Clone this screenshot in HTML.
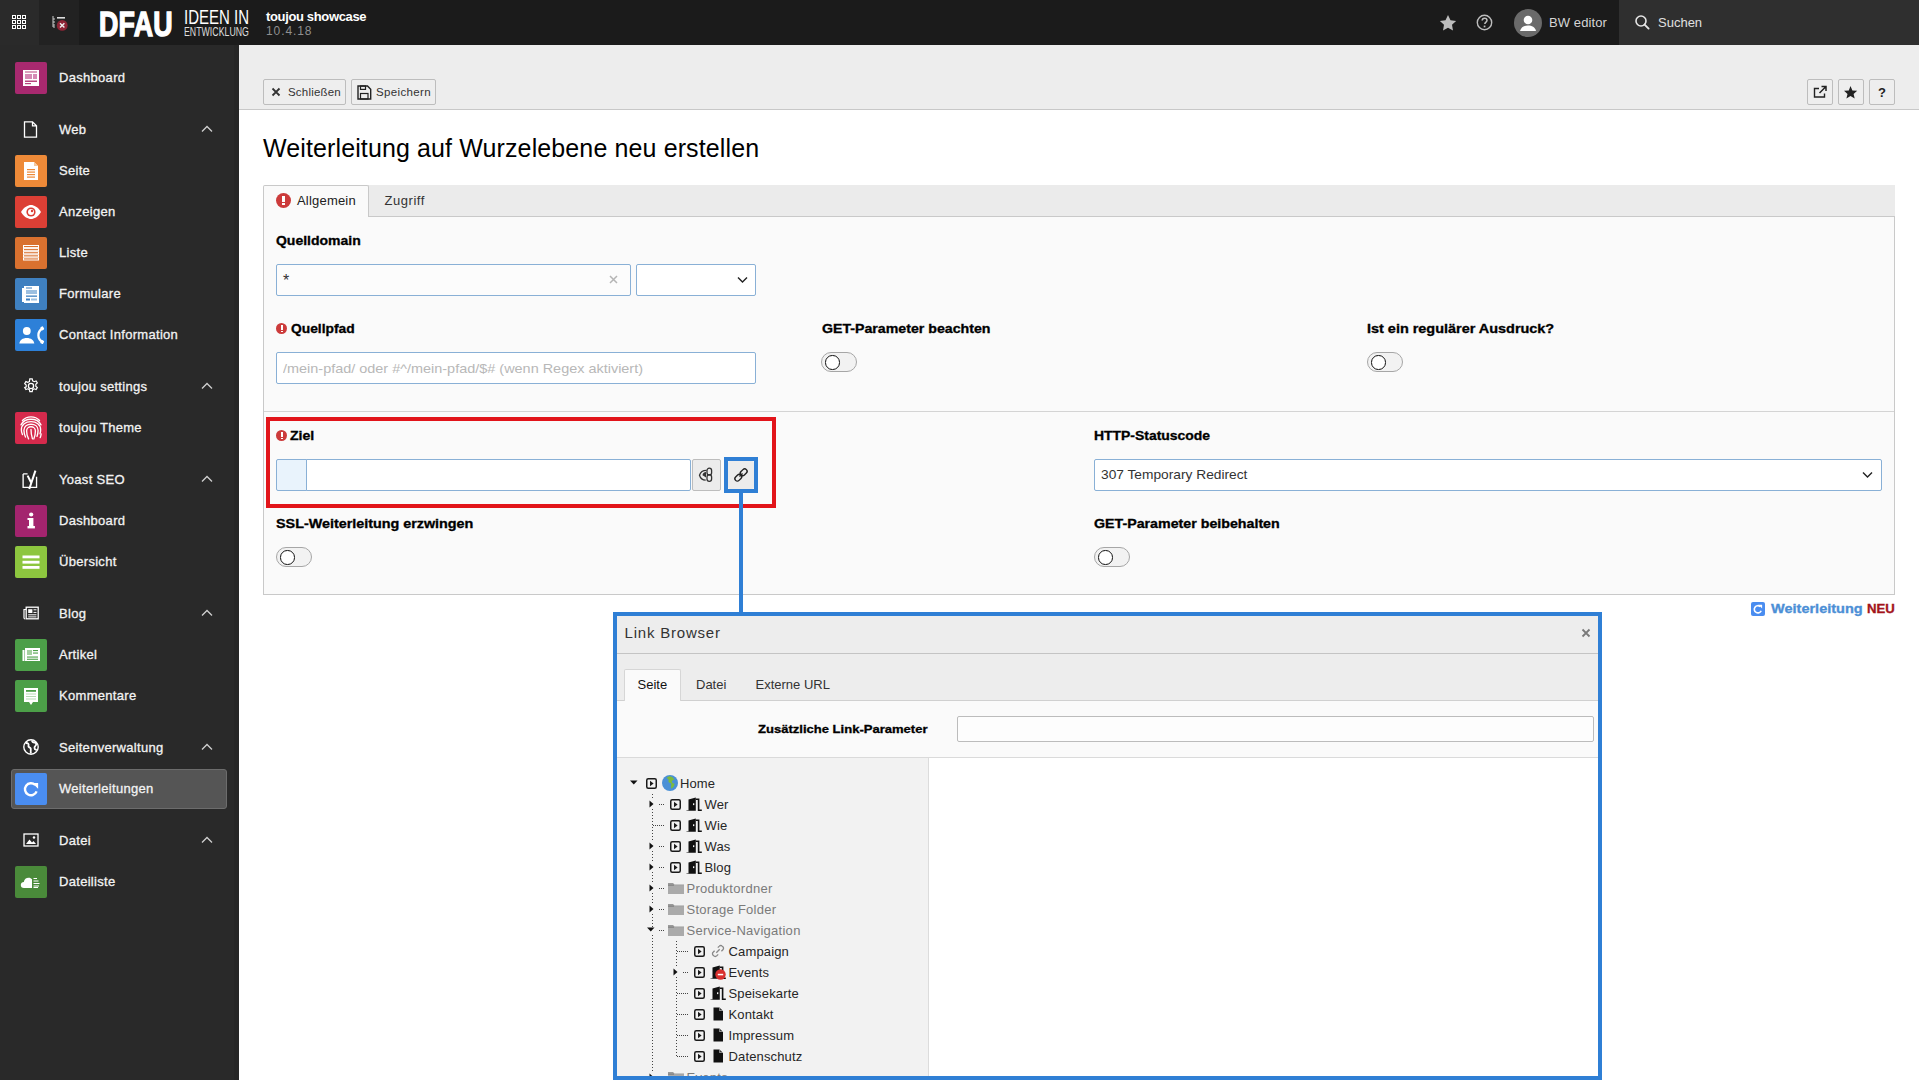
<!DOCTYPE html>
<html><head><meta charset="utf-8"><style>
*{box-sizing:border-box;margin:0;padding:0}
html,body{width:1920px;height:1080px;overflow:hidden;background:#fff;font-family:"Liberation Sans",sans-serif;position:relative}
.a{position:absolute}
.t{position:absolute;white-space:nowrap;line-height:1}
svg{position:absolute;overflow:visible}
.ic{position:absolute;left:15px;width:32px;height:32px;border-radius:2px}
.btn{position:absolute;height:26px;border:1px solid #bdbdbd;border-radius:2px;background:#eeeeee}
.inp{position:absolute;border:1px solid #89b0d6;border-radius:2px;background:#fff}
.tog{position:absolute;width:36px;height:20px;border:1px solid #a6a6a6;border-radius:10px;background:#f2f2f2}
.tog i{position:absolute;left:3px;top:2px;width:14.5px;height:14.5px;border:1.5px solid #111;border-radius:50%;background:#fff}
.err{position:absolute;width:11px;height:11px;border-radius:50%;background:#cc3b3b}
.err2:before,.err2:after{display:none}
.err:before{content:"";position:absolute;left:4.5px;top:2px;width:2px;height:4.5px;background:#fff}
.err:after{content:"";position:absolute;left:4.5px;top:7.5px;width:2px;height:1.6px;background:#fff}
</style></head><body>
<div class="a" style="left:0;top:0;width:1919px;height:45px;background:#1b1b1b"></div>
<div class="a" style="left:0;top:0;width:39px;height:45px;background:#2a2a2a"></div>
<div class="a" style="left:39px;top:0;width:40px;height:45px;background:#222222"></div>
<div class="a" style="left:1619px;top:0;width:300px;height:45px;background:#2f2f2f"></div>
<svg style="left:0;top:0" width="39" height="45"><rect x="12.5" y="15.5" width="3" height="3" fill="none" stroke="#fff" stroke-width="1"/><rect x="17.5" y="15.5" width="3" height="3" fill="none" stroke="#fff" stroke-width="1"/><rect x="22.5" y="15.5" width="3" height="3" fill="none" stroke="#fff" stroke-width="1"/><rect x="12.5" y="20.5" width="3" height="3" fill="none" stroke="#fff" stroke-width="1"/><rect x="17.5" y="20.5" width="3" height="3" fill="none" stroke="#fff" stroke-width="1"/><rect x="22.5" y="20.5" width="3" height="3" fill="none" stroke="#fff" stroke-width="1"/><rect x="12.5" y="25.5" width="3" height="3" fill="none" stroke="#fff" stroke-width="1"/><rect x="17.5" y="25.5" width="3" height="3" fill="none" stroke="#fff" stroke-width="1"/><rect x="22.5" y="25.5" width="3" height="3" fill="none" stroke="#fff" stroke-width="1"/></svg>
<svg style="left:39px;top:0" width="40" height="45"><path d="M14 16v11h2M14 19h2M14 22h2M14 25h2" stroke="#ccc" stroke-width="1" fill="none"/><rect x="18" y="17" width="8" height="1.6" fill="#ddd"/><circle cx="23.2" cy="25.4" r="5.4" fill="#8e2536"/><path d="M21 23.2l4.4 4.4M25.4 23.2l-4.4 4.4" stroke="#eee" stroke-width="1.4"/></svg>
<div class="t" style="left:99px;top:7.1px;font-size:34.5px;font-weight:bold;color:#fff;-webkit-text-stroke:1.4px #fff;letter-spacing:0.3px;transform:scaleX(0.775);transform-origin:left">DFAU</div>
<div class="t" style="left:184px;top:8.3px;font-size:19.75px;color:#fff;letter-spacing:0;transform:scaleX(0.76);transform-origin:left">IDEEN IN</div>
<div class="t" style="left:184px;top:25.45px;font-size:13.2px;color:#ddd;letter-spacing:0;transform:scaleX(0.666);transform-origin:left">ENTWICKLUNG</div>
<div class="t" style="left:266px;top:10.00px;font-size:13px;color:#fff;font-weight:700;letter-spacing:-0.35px;">toujou showcase</div>
<div class="t" style="left:266px;top:24.84px;font-size:12px;color:#8f8f8f;font-weight:400;letter-spacing:0.9px;">10.4.18</div>
<svg style="left:1439px;top:14px" width="18" height="18"><path d="M9 1l2.5 5.2 5.6.7-4.1 3.9 1 5.6L9 13.7 4 16.4l1-5.6L.9 6.9l5.6-.7z" fill="#bdbdbd"/></svg>
<svg style="left:1476px;top:14px" width="18" height="18"><circle cx="8.5" cy="8.5" r="7.2" fill="none" stroke="#bdbdbd" stroke-width="1.4"/><path d="M6.2 6.6c0-1.5 1-2.4 2.4-2.4s2.4.9 2.4 2.2c0 1.6-2.2 1.8-2.2 3.6" fill="none" stroke="#bdbdbd" stroke-width="1.5"/><rect x="7.7" y="11.6" width="1.7" height="1.7" fill="#bdbdbd"/></svg>
<svg style="left:1514px;top:9px" width="28" height="28"><circle cx="14" cy="14" r="14" fill="#6a6a6a"/><circle cx="14" cy="11" r="4.3" fill="#fff"/><path d="M6 22c1-4 4-5.5 8-5.5s7 1.5 8 5.5z" fill="#fff"/></svg>
<div class="t" style="left:1549px;top:15.50px;font-size:13px;color:#d5d5d5;font-weight:400;letter-spacing:0.1px;">BW editor</div>
<svg style="left:1635px;top:15px" width="15" height="15"><circle cx="6" cy="6" r="5" fill="none" stroke="#e6e6e6" stroke-width="1.6"/><path d="M9.6 9.6l4 4" stroke="#e6e6e6" stroke-width="1.9" stroke-linecap="round"/></svg>
<div class="t" style="left:1658px;top:15.50px;font-size:13px;color:#e0e0e0;font-weight:400;letter-spacing:0px;">Suchen</div>
<div class="a" style="left:0;top:45px;width:239px;height:1035px;background:#292929"></div>
<div class="a" style="left:234px;top:45px;width:5px;height:1035px;background:#262626"></div>
<div class="ic" style="top:62px;background:#a8296f"><svg width="32" height="32" style="left:0;top:0"><rect x="8" y="8" width="16" height="16" fill="#fff"/><rect x="10" y="12" width="7" height="5" fill="#d58bb5"/><rect x="18" y="12" width="4" height="5" fill="#d58bb5"/><rect x="10" y="18.5" width="12" height="1.5" fill="#b8477f"/><rect x="10" y="21" width="6" height="1.2" fill="#b8477f"/><rect x="10" y="9.5" width="12" height="1" fill="#b8477f"/></svg></div>
<div class="t" style="left:59px;top:70.50px;font-size:13px;color:#f2f2f2;font-weight:400;letter-spacing:0.3px;-webkit-text-stroke:0.3px #f2f2f2">Dashboard</div>
<svg style="left:23px;top:121px" width="16" height="16"><path d="M1.5 .8h8l4 4v11.4h-12z M9.5 .8v4h4" fill="none" stroke="#fff" stroke-width="1.3"/></svg>
<div class="t" style="left:59px;top:122.50px;font-size:13px;color:#f2f2f2;font-weight:400;letter-spacing:0.3px;-webkit-text-stroke:0.3px #f2f2f2">Web</div>
<svg style="left:201px;top:125px" width="12" height="8"><path d="M1 6.5L6 1.5l5 5" fill="none" stroke="#cfcfcf" stroke-width="1.3"/></svg>
<div class="ic" style="top:155px;background:#ee8a38"><svg width="32" height="32" style="left:0;top:0"><path d="M9 7h10l4 4v14H9z" fill="#fff"/><path d="M19 7v4h4" fill="#f6c79b"/><rect x="12" y="14" width="8" height="1.2" fill="#ee8a38"/><rect x="12" y="16.5" width="8" height="1.2" fill="#ee8a38"/><rect x="12" y="19" width="8" height="1.2" fill="#ee8a38"/><rect x="12" y="21.5" width="8" height="1.2" fill="#ee8a38"/></svg></div>
<div class="t" style="left:59px;top:163.50px;font-size:13px;color:#f2f2f2;font-weight:400;letter-spacing:0.3px;-webkit-text-stroke:0.3px #f2f2f2">Seite</div>
<div class="ic" style="top:196px;background:#dc3f35"><svg width="32" height="32" style="left:0;top:0"><path d="M6 16c3-5 7-7 10-7s7 2 10 7c-3 5-7 7-10 7s-7-2-10-7z" fill="#fff"/><circle cx="16" cy="16" r="4.6" fill="#dc3f35"/><circle cx="16" cy="16" r="3" fill="#fff"/><circle cx="17" cy="15" r="1.2" fill="#dc3f35"/></svg></div>
<div class="t" style="left:59px;top:204.50px;font-size:13px;color:#f2f2f2;font-weight:400;letter-spacing:0.3px;-webkit-text-stroke:0.3px #f2f2f2">Anzeigen</div>
<div class="ic" style="top:237px;background:#d9712f"><svg width="32" height="32" style="left:0;top:0"><rect x="8.5" y="8.5" width="15" height="2.1" fill="none" stroke="#fff" stroke-width="1"/><rect x="8.5" y="11.6" width="15" height="2.1" fill="none" stroke="#fff" stroke-width="1"/><rect x="8.5" y="14.7" width="15" height="2.1" fill="none" stroke="#fff" stroke-width="1"/><rect x="8.5" y="17.8" width="15" height="2.1" fill="none" stroke="#fff" stroke-width="1"/><rect x="8.5" y="20.9" width="15" height="2.1" fill="none" stroke="#fff" stroke-width="1"/></svg></div>
<div class="t" style="left:59px;top:245.50px;font-size:13px;color:#f2f2f2;font-weight:400;letter-spacing:0.3px;-webkit-text-stroke:0.3px #f2f2f2">Liste</div>
<div class="ic" style="top:278px;background:#3f80c0"><svg width="32" height="32" style="left:0;top:0"><rect x="9" y="8" width="15" height="17" fill="#fff"/><rect x="7" y="10" width="2" height="14" fill="#fff"/><rect x="11" y="12" width="11" height="4" fill="#9cbfe0"/><rect x="11" y="17.5" width="11" height="1.3" fill="#3f80c0"/><rect x="11" y="20.5" width="4" height="2" fill="#3f80c0"/><rect x="16" y="20.5" width="6" height="2" fill="#9cbfe0"/><rect x="11" y="9.5" width="6" height="1" fill="#3f80c0"/></svg></div>
<div class="t" style="left:59px;top:286.50px;font-size:13px;color:#f2f2f2;font-weight:400;letter-spacing:0.3px;-webkit-text-stroke:0.3px #f2f2f2">Formulare</div>
<div class="ic" style="top:319px;background:#2d80d8"><svg width="32" height="32" style="left:0;top:0"><circle cx="11.8" cy="12" r="3.9" fill="#fff"/><path d="M4.3 24.6c.4-3.6 3.4-5.7 7.5-5.7s7.1 2.1 7.5 5.7z" fill="#fff"/><path d="M27.4 9.6c-2.6 1.5-4 3.9-4 6.6s1.4 5.1 4 6.6" fill="none" stroke="#fff" stroke-width="2.3"/><rect x="25.6" y="7.6" width="3.2" height="3.6" rx="1" fill="#fff" transform="rotate(-30 27.2 9.4)"/><rect x="25.6" y="21.2" width="3.2" height="3.6" rx="1" fill="#fff" transform="rotate(30 27.2 23)"/></svg></div>
<div class="t" style="left:59px;top:327.50px;font-size:13px;color:#f2f2f2;font-weight:400;letter-spacing:0.3px;-webkit-text-stroke:0.3px #f2f2f2">Contact Information</div>
<svg style="left:23px;top:378px" width="16" height="16"><circle cx="8" cy="8" r="2.6" fill="none" stroke="#fff" stroke-width="1.3"/><path d="M6.8 .8h2.4l.4 2 1.6.9 1.9-.8 1.2 2-1.5 1.4v1.9l1.5 1.4-1.2 2-1.9-.8-1.6.9-.4 2H6.8l-.4-2-1.6-.9-1.9.8-1.2-2L3.2 8.9V7L1.7 5.6l1.2-2 1.9.8 1.6-.9z" fill="none" stroke="#fff" stroke-width="1.2"/></svg>
<div class="t" style="left:59px;top:379.50px;font-size:13px;color:#f2f2f2;font-weight:400;letter-spacing:0.3px;-webkit-text-stroke:0.3px #f2f2f2">toujou settings</div>
<svg style="left:201px;top:382px" width="12" height="8"><path d="M1 6.5L6 1.5l5 5" fill="none" stroke="#cfcfcf" stroke-width="1.3"/></svg>
<div class="ic" style="top:412px;background:#d52a4c"><svg width="32" height="32" style="left:0;top:0"><g fill="none" stroke="#fff" stroke-width="1.1" stroke-linecap="round" transform="translate(16 16.5) scale(1.22) translate(-16 -17)"><path d="M9 10.5c1.8-2 4.2-3 7-3s5.2 1 7 3"/><path d="M7.8 14c1.4-2.8 4.5-4.6 8.2-4.6s6.8 1.8 8.2 4.6"/><path d="M9 22c-.6-1.2-.9-2.6-.9-4 0-4.3 3.5-6.6 7.9-6.6s7.9 2.3 7.9 6.6c0 1.2-.2 2.3-.5 3.3"/><path d="M11.5 24c-.8-1.6-1.3-3.5-1.3-5.5 0-3.2 2.6-5 5.8-5s5.8 1.8 5.8 5c0 1.8-.3 3.5-.9 5"/><path d="M14 25.5c-1-1.8-1.6-4-1.6-6.5 0-2 1.6-3.4 3.6-3.4s3.6 1.4 3.6 3.4c0 2.6-.5 4.8-1.3 6.6"/><path d="M16 17.8c0 2.8.4 5.3 1.2 7.7"/><path d="M23.5 24.5c.4-.9.7-2 .8-3"/></g></svg></div>
<div class="t" style="left:59px;top:420.50px;font-size:13px;color:#f2f2f2;font-weight:400;letter-spacing:0.3px;-webkit-text-stroke:0.3px #f2f2f2">toujou Theme</div>
<svg style="left:23px;top:471px" width="16" height="16"><g transform="translate(-1 -1) scale(1.12)"><path d="M1 3.5h4M1 3.5v12h12V6" fill="none" stroke="#fff" stroke-width="1.2"/><path d="M5 5l3 6M12 .5L6.5 17" fill="none" stroke="#fff" stroke-width="1.8"/></g></svg>
<div class="t" style="left:59px;top:472.50px;font-size:13px;color:#f2f2f2;font-weight:400;letter-spacing:0.3px;-webkit-text-stroke:0.3px #f2f2f2">Yoast SEO</div>
<svg style="left:201px;top:475px" width="12" height="8"><path d="M1 6.5L6 1.5l5 5" fill="none" stroke="#cfcfcf" stroke-width="1.3"/></svg>
<div class="ic" style="top:505px;background:#a3246e"><svg width="32" height="32" style="left:0;top:0"><rect x="14" y="13" width="4.4" height="9" fill="#fff"/><rect x="12.5" y="21" width="7.4" height="2.4" fill="#fff"/><rect x="12.5" y="13" width="3" height="2" fill="#fff"/><circle cx="16.2" cy="9.5" r="2.1" fill="#fff"/></svg></div>
<div class="t" style="left:59px;top:513.50px;font-size:13px;color:#f2f2f2;font-weight:400;letter-spacing:0.3px;-webkit-text-stroke:0.3px #f2f2f2">Dashboard</div>
<div class="ic" style="top:546px;background:#8dc63f"><svg width="32" height="32" style="left:0;top:0"><rect x="7.5" y="9.5" width="17" height="2.8" fill="#fff"/><rect x="7.5" y="14.8" width="17" height="2.8" fill="#fff"/><rect x="7.5" y="20" width="17" height="2.8" fill="#fff"/></svg></div>
<div class="t" style="left:59px;top:554.50px;font-size:13px;color:#f2f2f2;font-weight:400;letter-spacing:0.3px;-webkit-text-stroke:0.3px #f2f2f2">Übersicht</div>
<svg style="left:23px;top:605px" width="16" height="16"><rect x="3.2" y="2.2" width="12" height="11.6" fill="none" stroke="#fff" stroke-width="1.3"/><path d="M3.2 4.5H1v8.2c0 .7.5 1.1 1.1 1.1" fill="none" stroke="#fff" stroke-width="1.2"/><rect x="5.2" y="4.2" width="4.2" height="3.8" fill="#fff"/><path d="M10.5 4.8h3M10.5 7.4h3M5.2 9.8h8.3M5.2 11.9h8.3" stroke="#fff" stroke-width="1"/></svg>
<div class="t" style="left:59px;top:606.50px;font-size:13px;color:#f2f2f2;font-weight:400;letter-spacing:0.3px;-webkit-text-stroke:0.3px #f2f2f2">Blog</div>
<svg style="left:201px;top:609px" width="12" height="8"><path d="M1 6.5L6 1.5l5 5" fill="none" stroke="#cfcfcf" stroke-width="1.3"/></svg>
<div class="ic" style="top:639px;background:#4c9f48"><svg width="32" height="32" style="left:0;top:0"><rect x="10" y="9" width="15" height="13" fill="#fff"/><rect x="7.5" y="11" width="2" height="11" fill="#fff"/><rect x="12" y="11" width="5" height="5" fill="#a4d09f"/><rect x="18" y="11" width="5" height="1.1" fill="#4c9f48"/><rect x="18" y="13.5" width="5" height="1.1" fill="#4c9f48"/><rect x="12" y="17.5" width="11" height="1.1" fill="#4c9f48"/><rect x="12" y="19.7" width="11" height="1.1" fill="#4c9f48"/></svg></div>
<div class="t" style="left:59px;top:647.50px;font-size:13px;color:#f2f2f2;font-weight:400;letter-spacing:0.3px;-webkit-text-stroke:0.3px #f2f2f2">Artikel</div>
<div class="ic" style="top:680px;background:#4c9f48"><svg width="32" height="32" style="left:0;top:0"><rect x="9" y="8" width="14" height="14" fill="#fff"/><path d="M14 22h4l-2 3z" fill="#fff"/><rect x="11" y="10" width="10" height="1.8" fill="#4c9f48"/><rect x="11" y="13.5" width="10" height="1" fill="#b5dbb2"/><rect x="11" y="16" width="10" height="1" fill="#b5dbb2"/><rect x="11" y="18.5" width="10" height="1" fill="#b5dbb2"/></svg></div>
<div class="t" style="left:59px;top:688.50px;font-size:13px;color:#f2f2f2;font-weight:400;letter-spacing:0.3px;-webkit-text-stroke:0.3px #f2f2f2">Kommentare</div>
<svg style="left:23px;top:739px" width="16" height="16"><circle cx="8" cy="8" r="7.2" fill="none" stroke="#fff" stroke-width="1.4"/><path d="M3 4c2 0 3 1 2.5 2.5s1 2 2 2.5-.5 3 .5 5.5M9 1.5c0 1.5 1 2 2.5 2s2 1 1.5 2.5-1.5 1-1.5 3 1.5 1.5 2 2" fill="none" stroke="#fff" stroke-width="1.8"/></svg>
<div class="t" style="left:59px;top:740.50px;font-size:13px;color:#f2f2f2;font-weight:400;letter-spacing:0.3px;-webkit-text-stroke:0.3px #f2f2f2">Seitenverwaltung</div>
<svg style="left:201px;top:743px" width="12" height="8"><path d="M1 6.5L6 1.5l5 5" fill="none" stroke="#cfcfcf" stroke-width="1.3"/></svg>
<div class="a" style="left:11px;top:769px;width:216px;height:40px;background:#555555;border:1px solid #6c6c6c;border-radius:3px"></div>
<div class="ic" style="top:773px;background:#4a8df0"><svg width="32" height="32" style="left:0;top:0"><path d="M21.6 18.3A6 6 0 1 1 20.2 12" fill="none" stroke="#fff" stroke-width="2.4"/><path d="M17.3 10h5.8v5.8z" fill="#fff"/></svg></div>
<div class="t" style="left:59px;top:781.50px;font-size:13px;color:#f2f2f2;font-weight:400;letter-spacing:0.3px;-webkit-text-stroke:0.3px #f2f2f2">Weiterleitungen</div>
<svg style="left:23px;top:832px" width="16" height="16"><rect x="1" y="2" width="14" height="12" fill="none" stroke="#fff" stroke-width="1.3"/><path d="M3 12l3.5-4.5 2.5 3 1.5-1.5L13 12z" fill="#fff"/><circle cx="11" cy="5.5" r="1.2" fill="#fff"/></svg>
<div class="t" style="left:59px;top:833.50px;font-size:13px;color:#f2f2f2;font-weight:400;letter-spacing:0.3px;-webkit-text-stroke:0.3px #f2f2f2">Datei</div>
<svg style="left:201px;top:836px" width="12" height="8"><path d="M1 6.5L6 1.5l5 5" fill="none" stroke="#cfcfcf" stroke-width="1.3"/></svg>
<div class="ic" style="top:866px;background:#4a8a3a"><svg width="32" height="32" style="left:0;top:0"><path d="M9 22c-2.2 0-3.2-1.5-3.2-3.1 0-1.8 1.4-3 3-3 .4-2.6 2.4-4.2 4.8-4.2 1.5 0 2.7.6 3.4 1.5V22z" fill="#fff"/><rect x="18.5" y="12" width="3.5" height="1" fill="#fff"/><rect x="18.5" y="14.5" width="5" height="1" fill="#fff"/><rect x="18.5" y="17" width="6" height="1" fill="#fff"/><rect x="18.5" y="19.5" width="5.5" height="1" fill="#fff"/><rect x="18.5" y="21" width="4.5" height="1" fill="#fff"/></svg></div>
<div class="t" style="left:59px;top:874.50px;font-size:13px;color:#f2f2f2;font-weight:400;letter-spacing:0.3px;-webkit-text-stroke:0.3px #f2f2f2">Dateiliste</div>
<div class="a" style="left:239px;top:45px;width:1680px;height:65px;background:#ededed;border-bottom:1px solid #c8c8c8"></div>
<div class="btn" style="left:263px;top:79px;width:83px"></div>
<svg style="left:271px;top:87px" width="10" height="10"><path d="M1.5 1.5l7 7M8.5 1.5l-7 7" stroke="#333" stroke-width="1.8"/></svg>
<div class="t" style="left:288px;top:86.77px;font-size:11.5px;color:#333;font-weight:400;letter-spacing:0.2px;">Schließen</div>
<div class="btn" style="left:351px;top:79px;width:85px"></div>
<svg style="left:357px;top:85px" width="15" height="15"><path d="M1 1h9.5l3.2 3.2V14H1z" fill="none" stroke="#222" stroke-width="1.4"/><rect x="3.5" y="1" width="5" height="3.4" fill="none" stroke="#222" stroke-width="1.2"/><rect x="3.5" y="8.5" width="7.5" height="5.5" fill="none" stroke="#222" stroke-width="1.2"/></svg>
<div class="t" style="left:376px;top:86.77px;font-size:11.5px;color:#333;font-weight:400;letter-spacing:0.35px;">Speichern</div>
<div class="btn" style="left:1807px;top:79px;width:26px"></div>
<div class="btn" style="left:1838px;top:79px;width:26px"></div>
<div class="btn" style="left:1869px;top:79px;width:26px"></div>
<svg style="left:1813px;top:85px" width="15" height="15"><path d="M6 3.5H1.5v8.5h10V8.5" fill="none" stroke="#222" stroke-width="1.4"/><path d="M6.5 8l6-6M8.5 1.5h4.5v4.5" fill="none" stroke="#222" stroke-width="1.5"/></svg>
<svg style="left:1843px;top:85px" width="15" height="15"><path d="M7.5 1l1.9 4.4 4.8.4-3.6 3.1 1.1 4.6-4.2-2.5-4.1 2.5 1.1-4.6L1 5.8l4.8-.4z" fill="#222"/></svg>
<div class="t" style="left:1878px;top:86.00px;font-size:13px;color:#222;font-weight:700;letter-spacing:0px;">?</div>
<div class="t" style="left:263px;top:135.84px;font-size:25px;color:#000;font-weight:400;letter-spacing:0.12px;">Weiterleitung auf Wurzelebene neu erstellen</div>
<div class="a" style="left:263px;top:216px;width:1632px;height:379px;background:#fafafa;border:1px solid #c9c9c9;border-top:0"></div>
<div class="a" style="left:264px;top:185px;width:1631px;height:32px;background:#ebebeb;border-bottom:1px solid #c9c9c9"></div>
<div class="a" style="left:263px;top:185px;width:106px;height:32px;background:#fafafa;border:1px solid #c9c9c9;border-bottom:0;border-radius:2px 2px 0 0"></div>
<div class="err err2" style="left:276px;top:193px;width:15px;height:15px"><b style="position:absolute;left:6px;top:3px;width:3px;height:6px;background:#fff"></b><b style="position:absolute;left:6px;top:10px;width:3px;height:2.2px;background:#fff"></b></div>
<div class="t" style="left:297px;top:194.00px;font-size:13px;color:#212121;font-weight:400;letter-spacing:0.2px;">Allgemein</div>
<div class="t" style="left:384.5px;top:194.00px;font-size:13px;color:#333;font-weight:400;letter-spacing:0.55px;">Zugriff</div>
<div class="t" style="left:276px;top:234.84px;font-size:12px;color:#000;font-weight:700;letter-spacing:0px;transform:scaleX(1.165);transform-origin:0 0;-webkit-text-stroke:0.3px #000">Quelldomain</div>
<div class="inp" style="left:276px;top:264px;width:355px;height:32px;background:#fcfcfc"></div>
<div class="t" style="left:283px;top:273.46px;font-size:16px;color:#333;font-weight:400;letter-spacing:0px;">*</div>
<svg style="left:609px;top:275px" width="9" height="9"><path d="M1 1l7 7M8 1l-7 7" stroke="#b5b5b5" stroke-width="1.5"/></svg>
<div class="inp" style="left:636px;top:264px;width:120px;height:32px"></div>
<svg style="left:737px;top:276px" width="11" height="8"><path d="M1 1.5l4.5 4.5 4.5-4.5" fill="none" stroke="#222" stroke-width="1.4"/></svg>
<div class="err" style="left:276px;top:323px"></div>
<div class="t" style="left:291px;top:322.84px;font-size:12px;color:#000;font-weight:700;letter-spacing:0px;transform:scaleX(1.151);transform-origin:0 0;-webkit-text-stroke:0.3px #000">Quellpfad</div>
<div class="inp" style="left:276px;top:352px;width:480px;height:32px"></div>
<div class="t" style="left:283px;top:361.50px;font-size:13px;color:#b8b8b8;font-weight:400;letter-spacing:0px;transform:scaleX(1.111);transform-origin:0 0;">/mein-pfad/ oder #^/mein-pfad/$# (wenn Regex aktiviert)</div>
<div class="t" style="left:821.5px;top:322.84px;font-size:12px;color:#000;font-weight:700;letter-spacing:0px;transform:scaleX(1.18);transform-origin:0 0;-webkit-text-stroke:0.3px #000">GET-Parameter beachten</div>
<div class="tog" style="left:821px;top:352px"><i></i></div>
<div class="t" style="left:1367px;top:322.84px;font-size:12px;color:#000;font-weight:700;letter-spacing:0px;transform:scaleX(1.203);transform-origin:0 0;-webkit-text-stroke:0.3px #000">Ist ein regulärer Ausdruck?</div>
<div class="tog" style="left:1367px;top:352px"><i></i></div>
<div class="a" style="left:264px;top:411px;width:1630px;height:1px;background:#d4d4d4"></div>
<div class="err" style="left:276px;top:430px"></div>
<div class="t" style="left:290px;top:429.84px;font-size:12px;color:#000;font-weight:700;letter-spacing:0px;transform:scaleX(1.175);transform-origin:0 0;-webkit-text-stroke:0.3px #000">Ziel</div>
<div class="inp" style="left:276px;top:459px;width:31px;height:32px;background:#e9f3fc;border-radius:2px 0 0 2px"></div>
<div class="inp" style="left:306px;top:459px;width:385px;height:32px;border-radius:0 2px 2px 0"></div>
<div class="btn" style="left:692px;top:459px;width:29px;height:32px;background:#ececec"></div>
<svg style="left:698px;top:467px" width="16" height="16"><path d="M8.5 3.3C5 3.3 2.3 5.5 1.5 8.2c.8 2.7 3.2 4.8 6.2 5" fill="none" stroke="#333" stroke-width="1.3"/><path d="M4.5 8.2c0-1.8 1.5-3.2 3.5-3.2v5.5z" fill="#333"/><rect x="9" y="1.2" width="4.6" height="6.8" rx="2.3" fill="none" stroke="#333" stroke-width="1.3"/><rect x="9" y="7.6" width="4.6" height="6.8" rx="2.3" fill="none" stroke="#333" stroke-width="1.3"/></svg>
<div class="btn" style="left:728px;top:461px;width:26px;height:28px;background:#ececec;border:none"></div>
<svg style="left:734px;top:468px" width="14" height="14"><g transform="rotate(-45 7 7)"><rect x="-0.6" y="4.6" width="7.6" height="4.8" rx="2.4" fill="none" stroke="#222" stroke-width="1.4"/><rect x="7" y="4.6" width="7.6" height="4.8" rx="2.4" fill="none" stroke="#222" stroke-width="1.4"/><path d="M4.8 7h4.4" stroke="#222" stroke-width="1.4"/></g></svg>
<div class="a" style="left:266px;top:417px;width:510px;height:91px;border:4px solid #e2141a"></div>
<div class="a" style="left:724px;top:457px;width:34px;height:36px;border:4px solid #2f7fd5"></div>
<div class="a" style="left:739px;top:493px;width:4px;height:120px;background:#2f7fd5"></div>
<div class="t" style="left:276px;top:517.84px;font-size:12px;color:#000;font-weight:700;letter-spacing:0px;transform:scaleX(1.195);transform-origin:0 0;-webkit-text-stroke:0.3px #000">SSL-Weiterleitung erzwingen</div>
<div class="tog" style="left:276px;top:547px"><i></i></div>
<div class="t" style="left:1094px;top:429.84px;font-size:12px;color:#000;font-weight:700;letter-spacing:0px;transform:scaleX(1.16);transform-origin:0 0;-webkit-text-stroke:0.3px #000">HTTP-Statuscode</div>
<div class="inp" style="left:1094px;top:459px;width:788px;height:32px"></div>
<div class="t" style="left:1101px;top:468.30px;font-size:13px;color:#333;font-weight:400;letter-spacing:0px;transform:scaleX(1.057);transform-origin:0 0;">307 Temporary Redirect</div>
<svg style="left:1862px;top:471px" width="11" height="8"><path d="M1 1.5l4.5 4.5 4.5-4.5" fill="none" stroke="#222" stroke-width="1.4"/></svg>
<div class="t" style="left:1094px;top:517.84px;font-size:12px;color:#000;font-weight:700;letter-spacing:0px;transform:scaleX(1.185);transform-origin:0 0;-webkit-text-stroke:0.3px #000">GET-Parameter beibehalten</div>
<div class="tog" style="left:1094px;top:547px"><i></i></div>
<svg style="left:1751px;top:602px" width="14" height="14"><rect width="14" height="14" rx="2" fill="#4a8df0"/><path d="M10.2 8.7A3.6 3.6 0 1 1 9.3 4.6" fill="none" stroke="#fff" stroke-width="1.6"/><path d="M7.5 2.8h3.6v3.6z" fill="#fff"/></svg>
<div class="t" style="left:1770.5px;top:602.84px;font-size:12px;color:#4c8fd6;font-weight:700;letter-spacing:0px;transform:scaleX(1.21);transform-origin:0 0;-webkit-text-stroke:0.3px #4c8fd6">Weiterleitung</div>
<div class="t" style="left:1867px;top:602.84px;font-size:12px;color:#a3141b;font-weight:700;letter-spacing:0px;transform:scaleX(1.1);transform-origin:0 0;-webkit-text-stroke:0.3px #a3141b">NEU</div>
<div class="a" style="left:617px;top:616px;width:981px;height:460px;background:#fff"></div>
<div class="a" style="left:617px;top:616px;width:981px;height:38px;background:#ededed;border-bottom:1px solid #c4c4c4"></div>
<div class="t" style="left:624.5px;top:625.30px;font-size:15px;color:#333;font-weight:400;letter-spacing:0.8px;">Link Browser</div>
<svg style="left:1581px;top:628px" width="10" height="10"><path d="M1.5 1.5l7 7M8.5 1.5l-7 7" stroke="#7a7a7a" stroke-width="1.8"/></svg>
<div class="a" style="left:617px;top:654px;width:981px;height:47px;background:#ededed;border-bottom:1px solid #d0d0d0"></div>
<div class="a" style="left:624px;top:669px;width:57px;height:32px;background:#fafafa;border:1px solid #d6d6d6;border-bottom:0;border-radius:2px 2px 0 0"></div>
<div class="t" style="left:637.5px;top:678.00px;font-size:13px;color:#111;font-weight:400;letter-spacing:0px;">Seite</div>
<div class="t" style="left:696px;top:678.00px;font-size:13px;color:#333;font-weight:400;letter-spacing:0px;">Datei</div>
<div class="t" style="left:755.5px;top:678.00px;font-size:13px;color:#333;font-weight:400;letter-spacing:0px;">Externe URL</div>
<div class="a" style="left:617px;top:701px;width:981px;height:57px;background:#fafafa;border-bottom:1px solid #dadada"></div>
<div class="t" style="left:757.5px;top:723.69px;font-size:11px;color:#000;font-weight:700;letter-spacing:0px;transform:scaleX(1.185);transform-origin:0 0;-webkit-text-stroke:0.3px #000">Zusätzliche Link-Parameter</div>
<div class="a" style="left:957px;top:716px;width:637px;height:26px;background:#fdfdfd;border:1px solid #bcbcbc;border-radius:2px"></div>
<div class="a" style="left:617px;top:758px;width:312px;height:318px;background:#f2f2f2;border-right:1px solid #dcdcdc"></div>
<svg style="left:630px;top:780px;background:#f2f2f2" width="8" height="6"><path d="M0 .5h7.5l-3.75 4z" fill="#111"/></svg>
<svg style="left:646px;top:778px" width="11" height="11"><rect x=".75" y=".75" width="9.5" height="9.5" rx="1.5" fill="none" stroke="#1a1a1a" stroke-width="1.5"/><path d="M4 2.8v5.4L7.6 5.5z" fill="#1a1a1a"/></svg>
<svg style="left:662px;top:775px" width="16" height="16"><circle cx="8" cy="8" r="8" fill="#4a90d6"/><path d="M4.5 3c1.5.3 2.5 1.5 2 3s1.5 1.8 2.5 2.2-.5 2.5.2 5.5c2-1 3.5-3 3.2-5.5-1.2.5-2 0-2.5-1.2s1-2 2.4-2.5C11 2 9 1.2 7 1.3z" fill="#7dbb3c"/></svg>
<div class="t" style="left:680px;top:777.00px;font-size:13px;color:#262626;font-weight:400;letter-spacing:0.1px;">Home</div>
<div class="a" style="left:652px;top:794px;width:1px;height:286px;background-image:linear-gradient(180deg,#444 34%,transparent 34%);background-size:1px 3px"></div>
<svg style="left:649px;top:800px;background:#f2f2f2" width="6" height="8"><path d="M0.5 0.5v7l4-3.5z" fill="#111"/></svg>
<div class="a" style="left:659px;top:804px;width:5px;height:1px;background-image:linear-gradient(90deg,#444 50%,transparent 50%);background-size:2px 1px"></div>
<svg style="left:670px;top:799px" width="11" height="11"><rect x=".75" y=".75" width="9.5" height="9.5" rx="1.5" fill="none" stroke="#1a1a1a" stroke-width="1.5"/><path d="M4 2.8v5.4L7.6 5.5z" fill="#1a1a1a"/></svg>
<svg style="left:686px;top:797px" width="17" height="15"><path d="M0.5 13.2h2V2.6L9.8 0.5v13.2H.5z" fill="#111"/><rect x="7" y="6.3" width="1.3" height="1.8" fill="#f2f2f2"/><path d="M9.8 2.2h2.8v11h3.2" fill="none" stroke="#111" stroke-width="1.6"/></svg>
<div class="t" style="left:704.5px;top:798.00px;font-size:13px;color:#262626;font-weight:400;letter-spacing:0.15px;">Wer</div>
<div class="a" style="left:653px;top:825px;width:11px;height:1px;background-image:linear-gradient(90deg,#444 50%,transparent 50%);background-size:2px 1px"></div>
<svg style="left:670px;top:820px" width="11" height="11"><rect x=".75" y=".75" width="9.5" height="9.5" rx="1.5" fill="none" stroke="#1a1a1a" stroke-width="1.5"/><path d="M4 2.8v5.4L7.6 5.5z" fill="#1a1a1a"/></svg>
<svg style="left:686px;top:818px" width="17" height="15"><path d="M0.5 13.2h2V2.6L9.8 0.5v13.2H.5z" fill="#111"/><rect x="7" y="6.3" width="1.3" height="1.8" fill="#f2f2f2"/><path d="M9.8 2.2h2.8v11h3.2" fill="none" stroke="#111" stroke-width="1.6"/></svg>
<div class="t" style="left:704.5px;top:819.00px;font-size:13px;color:#262626;font-weight:400;letter-spacing:0.15px;">Wie</div>
<svg style="left:649px;top:842px;background:#f2f2f2" width="6" height="8"><path d="M0.5 0.5v7l4-3.5z" fill="#111"/></svg>
<div class="a" style="left:659px;top:846px;width:5px;height:1px;background-image:linear-gradient(90deg,#444 50%,transparent 50%);background-size:2px 1px"></div>
<svg style="left:670px;top:841px" width="11" height="11"><rect x=".75" y=".75" width="9.5" height="9.5" rx="1.5" fill="none" stroke="#1a1a1a" stroke-width="1.5"/><path d="M4 2.8v5.4L7.6 5.5z" fill="#1a1a1a"/></svg>
<svg style="left:686px;top:839px" width="17" height="15"><path d="M0.5 13.2h2V2.6L9.8 0.5v13.2H.5z" fill="#111"/><rect x="7" y="6.3" width="1.3" height="1.8" fill="#f2f2f2"/><path d="M9.8 2.2h2.8v11h3.2" fill="none" stroke="#111" stroke-width="1.6"/></svg>
<div class="t" style="left:704.5px;top:840.00px;font-size:13px;color:#262626;font-weight:400;letter-spacing:0.15px;">Was</div>
<svg style="left:649px;top:863px;background:#f2f2f2" width="6" height="8"><path d="M0.5 0.5v7l4-3.5z" fill="#111"/></svg>
<div class="a" style="left:659px;top:867px;width:5px;height:1px;background-image:linear-gradient(90deg,#444 50%,transparent 50%);background-size:2px 1px"></div>
<svg style="left:670px;top:862px" width="11" height="11"><rect x=".75" y=".75" width="9.5" height="9.5" rx="1.5" fill="none" stroke="#1a1a1a" stroke-width="1.5"/><path d="M4 2.8v5.4L7.6 5.5z" fill="#1a1a1a"/></svg>
<svg style="left:686px;top:860px" width="17" height="15"><path d="M0.5 13.2h2V2.6L9.8 0.5v13.2H.5z" fill="#111"/><rect x="7" y="6.3" width="1.3" height="1.8" fill="#f2f2f2"/><path d="M9.8 2.2h2.8v11h3.2" fill="none" stroke="#111" stroke-width="1.6"/></svg>
<div class="t" style="left:704.5px;top:861.00px;font-size:13px;color:#262626;font-weight:400;letter-spacing:0.15px;">Blog</div>
<svg style="left:649px;top:884px;background:#f2f2f2" width="6" height="8"><path d="M0.5 0.5v7l4-3.5z" fill="#111"/></svg>
<div class="a" style="left:659px;top:888px;width:5px;height:1px;background-image:linear-gradient(90deg,#444 50%,transparent 50%);background-size:2px 1px"></div>
<svg style="left:668px;top:882px" width="16" height="12"><path d="M0 1h5l1.5 1.5H16V12H0z" fill="#9a9a9a"/><rect x="0" y="3.2" width="16" height="8.8" fill="#aaaaaa"/><rect x="0" y="2.6" width="6" height="1.4" fill="#8a8a8a"/></svg>
<div class="t" style="left:686.5px;top:882.00px;font-size:13px;color:#7a7a7a;font-weight:400;letter-spacing:0.28px;">Produktordner</div>
<svg style="left:649px;top:905px;background:#f2f2f2" width="6" height="8"><path d="M0.5 0.5v7l4-3.5z" fill="#111"/></svg>
<div class="a" style="left:659px;top:909px;width:5px;height:1px;background-image:linear-gradient(90deg,#444 50%,transparent 50%);background-size:2px 1px"></div>
<svg style="left:668px;top:903px" width="16" height="12"><path d="M0 1h5l1.5 1.5H16V12H0z" fill="#9a9a9a"/><rect x="0" y="3.2" width="16" height="8.8" fill="#aaaaaa"/><rect x="0" y="2.6" width="6" height="1.4" fill="#8a8a8a"/></svg>
<div class="t" style="left:686.5px;top:903.00px;font-size:13px;color:#7a7a7a;font-weight:400;letter-spacing:0.28px;">Storage Folder</div>
<svg style="left:647px;top:927px;background:#f2f2f2" width="8" height="6"><path d="M0 .5h7.5l-3.75 4z" fill="#111"/></svg>
<div class="a" style="left:659px;top:930px;width:5px;height:1px;background-image:linear-gradient(90deg,#444 50%,transparent 50%);background-size:2px 1px"></div>
<svg style="left:668px;top:924px" width="16" height="12"><path d="M0 1h5l1.5 1.5H16V12H0z" fill="#9a9a9a"/><rect x="0" y="3.2" width="16" height="8.8" fill="#aaaaaa"/><rect x="0" y="2.6" width="6" height="1.4" fill="#8a8a8a"/></svg>
<div class="t" style="left:686.5px;top:924.00px;font-size:13px;color:#7a7a7a;font-weight:400;letter-spacing:0.28px;">Service-Navigation</div>
<div class="a" style="left:676px;top:941px;width:1px;height:116px;background-image:linear-gradient(180deg,#444 34%,transparent 34%);background-size:1px 3px"></div>
<div class="a" style="left:677px;top:951px;width:11px;height:1px;background-image:linear-gradient(90deg,#444 50%,transparent 50%);background-size:2px 1px"></div>
<svg style="left:694px;top:946px" width="11" height="11"><rect x=".75" y=".75" width="9.5" height="9.5" rx="1.5" fill="none" stroke="#1a1a1a" stroke-width="1.5"/><path d="M4 2.8v5.4L7.6 5.5z" fill="#1a1a1a"/></svg>
<svg style="left:711px;top:944px" width="14" height="14"><path d="M5.3 8.7l3.4-3.4" stroke="#888" stroke-width="1.3"/><path d="M6.8 3.6l1.5-1.5a2 2 0 0 1 2.9 0l.7.7a2 2 0 0 1 0 2.9L10.4 7.2M7.2 10.4L5.7 11.9a2 2 0 0 1-2.9 0l-.7-.7a2 2 0 0 1 0-2.9L3.6 6.8" fill="none" stroke="#888" stroke-width="1.3"/></svg>
<div class="t" style="left:728.5px;top:945.00px;font-size:13px;color:#262626;font-weight:400;letter-spacing:0.15px;">Campaign</div>
<svg style="left:673px;top:968px;background:#f2f2f2" width="6" height="8"><path d="M0.5 0.5v7l4-3.5z" fill="#111"/></svg>
<div class="a" style="left:683px;top:972px;width:5px;height:1px;background-image:linear-gradient(90deg,#444 50%,transparent 50%);background-size:2px 1px"></div>
<svg style="left:694px;top:967px" width="11" height="11"><rect x=".75" y=".75" width="9.5" height="9.5" rx="1.5" fill="none" stroke="#1a1a1a" stroke-width="1.5"/><path d="M4 2.8v5.4L7.6 5.5z" fill="#1a1a1a"/></svg>
<svg style="left:710px;top:965px" width="17" height="15"><path d="M0.5 13.2h2V2.6L9.8 0.5v13.2H.5z" fill="#111"/><rect x="7" y="6.3" width="1.3" height="1.8" fill="#f2f2f2"/><path d="M9.8 2.2h2.8v11h3.2" fill="none" stroke="#111" stroke-width="1.6"/></svg>
<svg style="left:715px;top:969px" width="11" height="11"><circle cx="5.5" cy="5.5" r="5.2" fill="#d9302e"/><rect x="2.8" y="4.8" width="5.4" height="1.5" fill="#fff"/></svg>
<div class="t" style="left:728.5px;top:966.00px;font-size:13px;color:#262626;font-weight:400;letter-spacing:0.15px;">Events</div>
<div class="a" style="left:677px;top:993px;width:11px;height:1px;background-image:linear-gradient(90deg,#444 50%,transparent 50%);background-size:2px 1px"></div>
<svg style="left:694px;top:988px" width="11" height="11"><rect x=".75" y=".75" width="9.5" height="9.5" rx="1.5" fill="none" stroke="#1a1a1a" stroke-width="1.5"/><path d="M4 2.8v5.4L7.6 5.5z" fill="#1a1a1a"/></svg>
<svg style="left:710px;top:986px" width="17" height="15"><path d="M0.5 13.2h2V2.6L9.8 0.5v13.2H.5z" fill="#111"/><rect x="7" y="6.3" width="1.3" height="1.8" fill="#f2f2f2"/><path d="M9.8 2.2h2.8v11h3.2" fill="none" stroke="#111" stroke-width="1.6"/></svg>
<div class="t" style="left:728.5px;top:987.00px;font-size:13px;color:#262626;font-weight:400;letter-spacing:0.15px;">Speisekarte</div>
<div class="a" style="left:677px;top:1014px;width:11px;height:1px;background-image:linear-gradient(90deg,#444 50%,transparent 50%);background-size:2px 1px"></div>
<svg style="left:694px;top:1009px" width="11" height="11"><rect x=".75" y=".75" width="9.5" height="9.5" rx="1.5" fill="none" stroke="#1a1a1a" stroke-width="1.5"/><path d="M4 2.8v5.4L7.6 5.5z" fill="#1a1a1a"/></svg>
<svg style="left:712px;top:1007px" width="12" height="14"><path d="M1.5 .5h6l3.5 3.5v9.5H1.5z" fill="#111"/><path d="M7.5 .5V4h3.5z" fill="#f2f2f2"/><path d="M8.2 1.2v2.2h2.2" fill="#111"/></svg>
<div class="t" style="left:728.5px;top:1008.00px;font-size:13px;color:#262626;font-weight:400;letter-spacing:0.15px;">Kontakt</div>
<div class="a" style="left:677px;top:1035px;width:11px;height:1px;background-image:linear-gradient(90deg,#444 50%,transparent 50%);background-size:2px 1px"></div>
<svg style="left:694px;top:1030px" width="11" height="11"><rect x=".75" y=".75" width="9.5" height="9.5" rx="1.5" fill="none" stroke="#1a1a1a" stroke-width="1.5"/><path d="M4 2.8v5.4L7.6 5.5z" fill="#1a1a1a"/></svg>
<svg style="left:712px;top:1028px" width="12" height="14"><path d="M1.5 .5h6l3.5 3.5v9.5H1.5z" fill="#111"/><path d="M7.5 .5V4h3.5z" fill="#f2f2f2"/><path d="M8.2 1.2v2.2h2.2" fill="#111"/></svg>
<div class="t" style="left:728.5px;top:1029.00px;font-size:13px;color:#262626;font-weight:400;letter-spacing:0.15px;">Impressum</div>
<div class="a" style="left:677px;top:1056px;width:11px;height:1px;background-image:linear-gradient(90deg,#444 50%,transparent 50%);background-size:2px 1px"></div>
<svg style="left:694px;top:1051px" width="11" height="11"><rect x=".75" y=".75" width="9.5" height="9.5" rx="1.5" fill="none" stroke="#1a1a1a" stroke-width="1.5"/><path d="M4 2.8v5.4L7.6 5.5z" fill="#1a1a1a"/></svg>
<svg style="left:712px;top:1049px" width="12" height="14"><path d="M1.5 .5h6l3.5 3.5v9.5H1.5z" fill="#111"/><path d="M7.5 .5V4h3.5z" fill="#f2f2f2"/><path d="M8.2 1.2v2.2h2.2" fill="#111"/></svg>
<div class="t" style="left:728.5px;top:1050.00px;font-size:13px;color:#262626;font-weight:400;letter-spacing:0.15px;">Datenschutz</div>
<svg style="left:649px;top:1073px;background:#f2f2f2" width="6" height="8"><path d="M0.5 0.5v7l4-3.5z" fill="#111"/></svg>
<div class="a" style="left:659px;top:1077px;width:5px;height:1px;background-image:linear-gradient(90deg,#444 50%,transparent 50%);background-size:2px 1px"></div>
<svg style="left:668px;top:1071px" width="16" height="12"><path d="M0 1h5l1.5 1.5H16V12H0z" fill="#9a9a9a"/><rect x="0" y="3.2" width="16" height="8.8" fill="#aaaaaa"/><rect x="0" y="2.6" width="6" height="1.4" fill="#8a8a8a"/></svg>
<div class="t" style="left:686.5px;top:1071.00px;font-size:13px;color:#7a7a7a;font-weight:400;letter-spacing:0.28px;">Events</div>
<div class="a" style="left:613px;top:612px;width:989px;height:468px;border:4px solid #2f7fd5"></div>
</body></html>
